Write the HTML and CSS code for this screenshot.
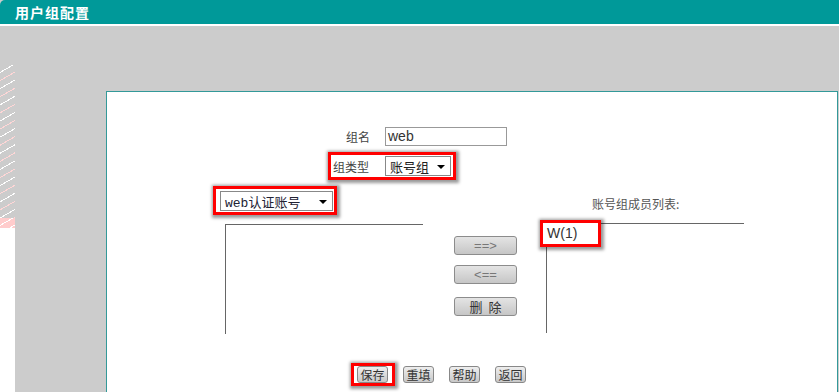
FILE: index.html
```html
<!DOCTYPE html>
<html lang="zh-CN">
<head>
	<meta charset="UTF-8">
	<title>用户组配置</title>
	<link rel="stylesheet" href="styles.css">
</head>
<body>
	<div class="titlebar">用户组配置</div>
	<div class="main">
		<div class="side"><div class="stripes"></div><div class="band"></div></div>
		<div class="panel">
			<div class="row row-name">
				<span class="label">组名</span>
				<span class="input">web</span>
			</div>
			<div class="row row-type">
				<span class="mark">
					<span class="label wide">组类型</span>
					<span class="select sel-type">账号组<i class="arrow"></i></span>
				</span>
			</div>
			<div class="row row-src">
				<span class="mark mark-src">
					<span class="select sel-src">web认证账号<i class="arrow"></i></span>
				</span>
				<span class="caption">账号组成员列表:</span>
			</div>
			<div class="lists">
				<div class="listbox"></div>
				<div class="ops">
					<span class="btn">==&gt;</span>
					<span class="btn">&lt;==</span>
					<span class="btn del">删&nbsp;&nbsp;除</span>
				</div>
				<div class="listbox right">
					<span class="mark item"><span class="opt">W(1)</span></span>
				</div>
			</div>
			<div class="actions">
				<span class="mark mark-save"><span class="sbtn">保存</span></span>
				<span class="sbtn">重填</span>
				<span class="sbtn">帮助</span>
				<span class="sbtn">返回</span>
			</div>
		</div>
	</div>
</body>
</html>
```

FILE: styles.css
```css
* {margin: 0;padding: 0;box-sizing: border-box;}
body {background: #ccc;font: 12px "Liberation Sans", "Noto Sans CJK SC", sans-serif;color: #333;overflow: hidden;}
.titlebar {height: 26px;padding-left: 15px;background: #009999;border-bottom: 2px solid #fff;border-top-left-radius: 5px;color: #fff;font: bold 14px "Noto Sans CJK SC", sans-serif;line-height: 24px;letter-spacing: 1px;}
.main {display: flex;height: 366px;overflow: hidden;}
.side {width: 15px;padding-top: 39px;background: linear-gradient(#ccc 0 202px, #fff 202px);}
.side .stripes {height: 153px;background: repeating-linear-gradient(150deg, #ccc 0 6px, #fff 6px 7px, #ccc 7px 13px, #ffd6d6 13px 14px);}
.side .band {height: 10px;background: repeating-linear-gradient(150deg, #ffcccc 0 6px, #fff 6px 7px);}
.panel {width: 732px;height: 400px;margin: 65px 0 0 91px;background: #fff;border: 1px solid #339999;padding-top: 35px;flex-shrink: 0;}
.row {display: flex;align-items: center;}
.label {color: #444;font-size: 12px;}
.row-name {padding-left: 239px;height: 19px;}
.row-name .label {width: 39px;}
.input {width: 122px;height: 19px;border: 1px solid #999;padding-left: 2px;font-size: 14px;line-height: 17px;color: #333;}
.mark {display: inline-flex;align-items: center;border: 3px solid #f00;background: #fff;box-shadow: 1px 1px 3px 2px rgba(0, 0, 0, .4);}
.row-type {margin-top: 6px;padding-left: 221px;}
.row-type .mark {padding: 1px 2px;}
.label.wide {width: 52px;font-size: 12px;}
.select {position: relative;display: flex;align-items: center;height: 20px;border: 1px solid #888;padding-left: 4px;font: 13px "Noto Sans CJK SC", sans-serif;color: #222;}
.sel-type {width: 66px;}
.sel-src {width: 113px;font-family: "Liberation Mono", "Noto Sans CJK SC", monospace;font-size: 13px;color: #223;}
.arrow {position: absolute;right: 5px;top: 8px;width: 0;height: 0;border-left: 4px solid transparent;border-right: 4px solid transparent;border-top: 4px solid #000;}
.row-src {margin-top: 6px;padding-left: 106px;height: 29px;}
.mark-src {padding: 2px 1px 1px 4px;}
.caption {margin-left: 255px;margin-top: 5px;color: #555;font: 12px "Noto Sans CJK SC", sans-serif;}
.lists {display: flex;align-items: flex-start;padding-left: 118px;margin-top: 9px;}
.listbox {width: 198px;height: 110px;border-top: 1px solid #666;border-left: 1px solid #666;}
.listbox.right {margin-left: 29px;margin-top: -1px;}
.ops {display: flex;flex-direction: column;width: 63px;margin: 12px 0 0 31px;}
.btn {height: 19px;border: 1px solid #8c8c8c;border-radius: 3px;background: linear-gradient(#e4e4e4, #c6c6c6);text-align: center;color: #777;font: 13px "Liberation Sans", "Noto Sans CJK SC", sans-serif;line-height: 17px;}
.btn + .btn {margin-top: 10px;}
.btn.del {margin-top: 13px;color: #333;font: 13px "Noto Sans CJK SC", sans-serif;line-height: 17px;}
.mark.item {position: relative;left: -7px;top: -4px;}
.opt {display: block;width: 55px;height: 21px;padding-left: 4px;font: 14px "Liberation Sans", sans-serif;line-height: 21px;color: #333;}
.actions {display: flex;align-items: center;padding-left: 244px;margin-top: 29px;}
.mark-save {padding: 0 4px 0 3px;}
.sbtn {display: inline-block;width: 31px;height: 17px;border: 1px solid #888;border-radius: 3px;background: linear-gradient(#eee, #c8c8c8);text-align: center;font: 12px "Noto Sans CJK SC", serif;line-height: 15px;color: #333;}
.mark-save + .sbtn {margin-left: 8px;}
.sbtn + .sbtn {margin-left: 15px;}
```
